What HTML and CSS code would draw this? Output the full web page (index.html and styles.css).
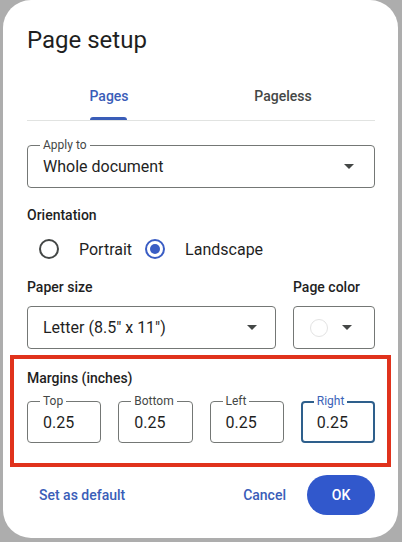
FILE: index.html
```html
<!DOCTYPE html>
<html>
<head>
<meta charset="utf-8">
<link rel="stylesheet" href="styles.css">
</head>
<body>
<div class="dialog">
  <h1 class="title">Page setup</h1>
  <div class="tabs">
    <div class="tab active"><span class="tab-label">Pages</span></div>
    <div class="tab"><span class="tab-label">Pageless</span></div>
  </div>

  <div class="field apply">
    <span class="field-label">Apply to</span>
    <span class="field-value">Whole document</span>
    <svg class="caret" width="10" height="5" viewBox="0 0 10 5"><polygon points="0,0 10,0 5,5" fill="#444746"/></svg>
  </div>

  <div class="section-label orient-label">Orientation</div>
  <div class="radios">
    <span class="radio"></span><span class="radio-text">Portrait</span>
    <span class="radio checked"></span><span class="radio-text">Landscape</span>
  </div>

  <div class="paper-row">
    <div class="paper-col">
      <div class="section-label">Paper size</div>
      <div class="field select">
        <span class="field-value">Letter (8.5" x 11")</span>
        <svg class="caret" width="10" height="5" viewBox="0 0 10 5"><polygon points="0,0 10,0 5,5" fill="#444746"/></svg>
      </div>
    </div>
    <div class="color-col">
      <div class="section-label">Page color</div>
      <div class="field color-select">
        <span class="swatch"></span>
        <svg class="caret" width="10" height="5" viewBox="0 0 10 5"><polygon points="0,0 10,0 5,5" fill="#444746"/></svg>
      </div>
    </div>
  </div>

  <div class="margins">
    <div class="section-label">Margins (inches)</div>
    <div class="margin-grid">
      <div class="field mfield"><span class="field-label">Top</span><span class="field-value">0.25</span></div>
      <div class="field mfield"><span class="field-label">Bottom</span><span class="field-value">0.25</span></div>
      <div class="field mfield"><span class="field-label">Left</span><span class="field-value">0.25</span></div>
      <div class="field mfield focused"><span class="field-label">Right</span><span class="field-value">0.25</span></div>
    </div>
  </div>

  <div class="footer">
    <span class="text-btn">Set as default</span>
    <span class="spacer"></span>
    <span class="text-btn">Cancel</span>
    <span class="ok-btn">OK</span>
  </div>
</div>
</body>
</html>
```

FILE: styles.css
```css
* { box-sizing: border-box; }
html, body { margin: 0; padding: 0; }
body {
  background: #adadad;
  width: 402px;
  height: 542px;
  overflow: hidden;
  font-family: Roboto, "Liberation Sans", sans-serif;
  color: #1f1f1f;
}
.dialog {
  margin-left: 3px;
  width: 395px;
  height: 538px;
  background: #fff;
  border-radius: 28px;
  padding: 24px 23px 23px 24px;
  display: flex;
  flex-direction: column;
}
.title {
  margin: 0;
  font-size: 24px;
  line-height: 32px;
  font-weight: 400;
  color: #1f1f1f;
}
.tabs {
  margin-top: 16px;
  display: flex;
  border-bottom: 1px solid #e1e3e1;
}
.tab {
  flex: 1;
  height: 48px;
  display: flex;
  justify-content: center;
  padding-right: 10px;
}
.tab-label {
  position: relative;
  display: flex;
  align-items: center;
  font-size: 14px;
  font-weight: 500;
  color: #444746;
}
.tab.active .tab-label { color: #3a5db8; }
.tab.active .tab-label::after {
  content: "";
  position: absolute;
  left: 1px;
  right: 2px;
  bottom: 0;
  height: 3px;
  background: #3a5db8;
  border-radius: 3px 3px 0 0;
}
.field {
  position: relative;
  border: 1px solid #747775;
  border-radius: 4px;
  display: flex;
  align-items: center;
  padding-left: 15px;
}
.field-label {
  position: absolute;
  top: -8px;
  left: 12px;
  padding: 0 3px;
  background: #fff;
  font-size: 12px;
  line-height: 14px;
  color: #444746;
}
.field-value {
  font-size: 16px;
  color: #1f1f1f;
}
.caret { margin-left: auto; }
.apply {
  margin-top: 24px;
  height: 43px;
  padding-right: 20px;
}
.section-label {
  font-size: 14px;
  line-height: 20px;
  font-weight: 500;
  color: #1f1f1f;
}
.orient-label { margin-top: 17px; }
.radios {
  display: flex;
  align-items: center;
  height: 40px;
  margin-top: 4px;
}
.radio {
  width: 20px;
  height: 20px;
  border: 2px solid #444746;
  border-radius: 50%;
  margin-left: 12px;
  display: flex;
  align-items: center;
  justify-content: center;
}
.radio + .radio-text { margin-left: 20px; }
.radio-text { font-size: 16px; }
.radio.checked {
  margin-left: 13px;
  border-color: #3a5dc4;
}
.radio.checked::after {
  content: "";
  width: 10px;
  height: 10px;
  border-radius: 50%;
  background: #3a5dc4;
}
.paper-row {
  margin-top: 8px;
  display: flex;
  gap: 17px;
}
.paper-col { flex: 1; }
.color-col { width: 82px; }
.select {
  margin-top: 9px;
  height: 43px;
  padding-right: 18px;
}
.color-select {
  margin-top: 9px;
  height: 43px;
  padding-left: 16px;
  padding-right: 22px;
}
.swatch {
  width: 18px;
  height: 18px;
  border-radius: 50%;
  border: 1px solid #e3e3e3;
}
.margins {
  margin: 6px -16px 0 -17px;
  border: 4px solid #e0321c;
  padding: 9px 12px 20px 13px;
}
.margin-grid {
  margin-top: 13px;
  display: grid;
  grid-template-columns: repeat(4, 1fr);
  gap: 17px;
}
.mfield {
  height: 42px;
}
.mfield.focused {
  border: 2px solid #2e5f8c;
  padding-left: 14px;
}
.mfield.focused .field-label {
  color: #3b63b8;
  top: -9px;
  left: 11px;
}
.footer {
  margin-top: auto;
  display: flex;
  align-items: center;
  height: 40px;
}
.text-btn {
  padding: 0 12px;
  font-size: 14px;
  font-weight: 500;
  color: #3a5db8;
  line-height: 40px;
}
.spacer { flex: 1; }
.ok-btn {
  margin-left: 9px;
  width: 68px;
  height: 40px;
  border-radius: 20px;
  background: #3158cc;
  color: #fff;
  font-size: 14px;
  font-weight: 500;
  display: flex;
  align-items: center;
  justify-content: center;
}
```
